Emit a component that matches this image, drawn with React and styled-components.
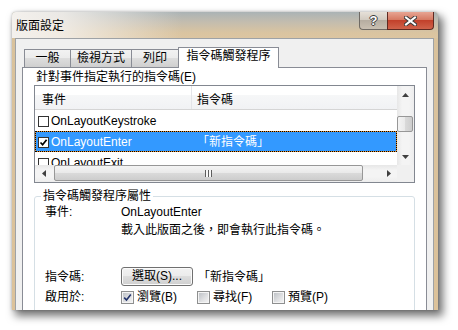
import React from 'react';
import styled, { createGlobalStyle } from 'styled-components';

const GlobalStyle = createGlobalStyle`
  html, body {
    margin: 0;
    padding: 0;
    background: #fff;
  }
  body {
    font-family: "Liberation Sans", "Noto Sans CJK TC", sans-serif;
    font-size: 12px;
    color: #000;
  }
  * {
    box-sizing: border-box;
  }
`;

const Page = styled.div`
  width: 458px;
  height: 330px;
  padding: 12px 0 0 12px;
  overflow: hidden;
`;

// 창 전체 (아래쪽은 잘려 있음)
const Window = styled.div`
  width: 426px;
  height: 298px;
  display: flex;
  flex-direction: column;
  overflow: hidden;
  border-radius: 4px 4px 0 0;
  background: linear-gradient(to bottom, #d9c29c, #dcc29a);
  box-shadow: 4px 5px 8px 1px rgba(0, 0, 0, 0.55), 0 0 3px rgba(0, 0, 0, 0.25);
`;

const TitleBar = styled.div`
  height: 26px;
  flex: none;
  display: flex;
  justify-content: space-between;
  align-items: flex-start;
  background:
    linear-gradient(to right, rgba(244, 241, 237, 1) 0%, rgba(244, 241, 237, 0.85) 12%, rgba(244, 241, 237, 0) 40%),
    linear-gradient(to bottom, #aab3b5 0%, #c4bdae 40%, #dac4a0 80%, #dcc5a1 100%);
`;

const Title = styled.div`
  padding: 5px 0 0 4px;
  line-height: 16px;
  font-family: "Noto Sans CJK TC", sans-serif;
`;

const CaptionButtons = styled.div`
  display: flex;
  margin-right: 4px;
`;

const HelpButton = styled.div`
  width: 28px;
  height: 18px;
  display: flex;
  align-items: center;
  justify-content: center;
  border: 1px solid #6f6a64;
  border-top: none;
  border-right: none;
  border-bottom-left-radius: 4px;
  background: linear-gradient(#e6e0d8 0%, #d2cbc1 45%, #b6ada1 50%, #c9bfb1 100%);
  color: #fff;
  font: bold 13px "Liberation Sans", sans-serif;
  text-shadow: 1px 0 #3c3c3c, -1px 0 #3c3c3c, 0 1px #3c3c3c, 0 -1px #3c3c3c;
`;

const CloseButton = styled.div`
  width: 47px;
  height: 18px;
  display: flex;
  align-items: center;
  justify-content: center;
  border: 1px solid #5f2a22;
  border-top: none;
  border-bottom-right-radius: 4px;
  background: linear-gradient(#e7a593 0%, #d67a63 45%, #c2412b 50%, #d0624a 100%);
`;

const FrameBody = styled.div`
  flex: 1;
  display: flex;
  padding: 0 4px 0 3px;
  min-height: 0;
`;

const Client = styled.div`
  flex: 1;
  display: flex;
  flex-direction: column;
  background: #f0f0f0;
  border: 1px solid #9ea2a6;
  border-bottom: none;
  padding: 8px 6px 0 6px;
  min-height: 0;
`;

const TabStrip = styled.div`
  height: 20px;
  flex: none;
  display: flex;
  align-items: flex-end;
  padding-left: 2px;
  position: relative;
  z-index: 1;
`;

const Tab = styled.div`
  width: ${({ $w }) => $w}px;
  height: ${({ $active }) => ($active ? 21 : 18)}px;
  margin-right: -1px;
  margin-bottom: ${({ $active }) => ($active ? -1 : 0)}px;
  border: 1px solid #898c95;
  border-bottom: none;
  text-align: center;
  line-height: ${({ $active }) => ($active ? 17 : 17)}px;
  background: ${({ $active }) =>
    $active ? '#fff' : 'linear-gradient(#f2f2f2 0%, #ebebeb 50%, #dddddd 50%, #cfcfcf 100%)'};
  white-space: nowrap;
`;

const Panel = styled.div`
  flex: 1;
  background: #fff;
  border: 1px solid #898c95;
  border-bottom: none;
  min-height: 0;
`;

const SectionLabel = styled.div`
  margin: 1px 0 0 13px;
  line-height: 16px;
`;

const ListBox = styled.div`
  margin-left: 11px;
  width: 381px;
  height: 98px;
  border: 1px solid #828790;
  display: grid;
  grid-template-columns: 362px 17px;
  grid-template-rows: 79px 17px;
`;

const ListView = styled.div`
  overflow: hidden;
  background: #fff;
`;

const ListHeader = styled.div`
  height: 24px;
  display: flex;
  border-bottom: 1px solid #d5d5d5;
  background: linear-gradient(#ffffff 0%, #ffffff 40%, #f6f7f8 40%, #f1f2f4 100%);
`;

const HeaderCell = styled.div`
  width: ${({ $w }) => ($w ? `${$w}px` : 'auto')};
  flex: ${({ $w }) => ($w ? 'none' : 1)};
  padding: 6px 0 0 ${({ $pad }) => $pad}px;
  line-height: 16px;
  border-right: ${({ $w }) => ($w ? '1px solid #e3e4e8' : 'none')};
`;

const Row = styled.div`
  height: 21px;
  display: flex;
  align-items: center;
  border: 1px ${({ $selected }) => ($selected ? 'dotted #000' : 'solid transparent')};
  background: ${({ $selected }) =>
    $selected ? 'linear-gradient(#3399ff, #3399ff) padding-box, #e8902a border-box' : 'none'};
  color: ${({ $selected }) => ($selected ? '#fff' : '#000')};
  line-height: 19px;
  white-space: nowrap;
`;

const Cell = styled.div`
  width: ${({ $w }) => ($w ? `${$w}px` : 'auto')};
  flex: ${({ $w }) => ($w ? 'none' : 1)};
  display: flex;
  align-items: center;
  gap: 2px;
  padding: 1px 0 0 ${({ $pad }) => $pad}px;
`;

const ListCheck = styled.span`
  width: 11px;
  height: 11px;
  flex: none;
  border: 1px solid #333;
  background: #fff;
  display: flex;
  align-items: center;
  justify-content: center;
`;

const VScroll = styled.div`
  display: flex;
  flex-direction: column;
  background: linear-gradient(to right, #e7e7e7, #f4f4f4 30%, #f4f4f4 70%, #ededed);
`;

const HScroll = styled.div`
  display: flex;
  background: linear-gradient(#e7e7e7, #f4f4f4 30%, #f4f4f4 70%, #ededed);
`;

const ScrollCorner = styled.div`
  background: #f0f0f0;
`;

const ScrollButton = styled.div`
  width: 17px;
  height: 17px;
  flex: none;
  display: flex;
  align-items: center;
  justify-content: center;
`;

const VTrack = styled.div`
  flex: 1;
  padding-top: ${({ $offset }) => $offset}px;
`;

const VThumb = styled.div`
  width: 16px;
  height: 16px;
  border: 1px solid #979797;
  border-radius: 2px;
  background: linear-gradient(to right, #f4f4f4, #e9e9e9 50%, #dadada 50%, #cdcdcd);
`;

const HTrack = styled.div`
  flex: 1;
  padding-left: ${({ $offset }) => $offset}px;
`;

const HThumb = styled.div`
  height: 16px;
  display: flex;
  align-items: center;
  justify-content: center;
  border: 1px solid #979797;
  border-radius: 2px;
  background: linear-gradient(#f4f4f4, #e9e9e9 50%, #dadada 50%, #cdcdcd);
`;

const Grip = styled.div`
  width: 7px;
  height: 7px;
  background: repeating-linear-gradient(to right, #5e5e5e 0 1px, #f8f8f8 1px 3px);
`;

const Group = styled.fieldset`
  margin: 5px 0 0 11px;
  width: 381px;
  padding: 0;
  min-width: 0;
  border: 1px solid #d5dfe5;
  border-radius: 3px;
`;

const Legend = styled.legend`
  margin-left: 6px;
  padding: 0 2px;
  line-height: 16px;
`;

const PropGrid = styled.div`
  display: grid;
  grid-template-columns: 76px 1fr;
  align-items: center;
  padding: 0 0 30px 10px;
  line-height: 18px;
  margin-top: -1px;
`;

const PropLabel = styled.div`
  align-self: ${({ $top }) => ($top ? 'start' : 'center')};
  margin-top: ${({ $gap }) => $gap || 0}px;
`;

const PropValue = styled.div`
  display: flex;
  flex-direction: ${({ $column }) => ($column ? 'column' : 'row')};
  align-items: ${({ $column }) => ($column ? 'flex-start' : 'center')};
  margin-top: ${({ $gap }) => $gap || 0}px;
  white-space: nowrap;
`;

const PushButton = styled.div`
  width: 72px;
  height: 19px;
  border: 1px solid #707070;
  border-radius: 3px;
  box-shadow: inset 0 0 0 1px #fbfbfb;
  background: linear-gradient(#f2f2f2 0%, #ebebeb 50%, #dddddd 50%, #cfcfcf 100%);
  text-align: center;
  line-height: 17px;
`;

const ScriptName = styled.span`
  margin-left: 5px;
`;

const CheckItem = styled.label`
  width: ${({ $w }) => ($w ? `${$w}px` : 'auto')};
  display: flex;
  align-items: center;
  gap: 3px;
`;

const CheckBox = styled.span`
  width: 13px;
  height: 13px;
  flex: none;
  border: 1px solid #8e8f8f;
  box-shadow: inset 0 0 0 1px #f4f4f4;
  background: linear-gradient(135deg, #b9bdc2 0%, #dedfe1 55%, #f6f6f6 100%);
  display: flex;
  align-items: center;
  justify-content: center;
`;

function Arrow({ dir }) {
  const pts = {
    up: '3.5,0 7,4 0,4',
    down: '0,0 7,0 3.5,4',
    left: '4,0 4,7 0,3.5',
    right: '0,0 4,3.5 0,7',
  }[dir];
  const vertical = dir === 'up' || dir === 'down';
  return (
    <svg width={vertical ? 7 : 4} height={vertical ? 4 : 7}>
      <polygon points={pts} fill="#404040" />
    </svg>
  );
}

const tabs = [
  { label: '一般', w: 47 },
  { label: '檢視方式', w: 62 },
  { label: '列印', w: 48 },
  { label: '指令碼觸發程序', w: 101, active: true },
];

const events = [
  { name: 'OnLayoutKeystroke', script: '', checked: false },
  { name: 'OnLayoutEnter', script: '「新指令碼」', checked: true, selected: true },
  { name: 'OnLayoutExit', script: '', checked: false },
];

export default function App() {
  return (
    <>
      <GlobalStyle />
      <Page>
        <Window>
          <TitleBar>
            <Title>版面設定</Title>
            <CaptionButtons>
              <HelpButton>?</HelpButton>
              <CloseButton>
                <svg width="13" height="10" viewBox="0 0 13 10">
                  <path d="M2 1.5 L11 8.5 M11 1.5 L2 8.5" stroke="#3a3a3a" strokeWidth="4" strokeLinecap="square" />
                  <path d="M2 1.5 L11 8.5 M11 1.5 L2 8.5" stroke="#fff" strokeWidth="2" strokeLinecap="square" />
                </svg>
              </CloseButton>
            </CaptionButtons>
          </TitleBar>

          <FrameBody>
            <Client>
              <TabStrip>
                {tabs.map((t) => (
                  <Tab key={t.label} $w={t.w} $active={t.active}>
                    {t.label}
                  </Tab>
                ))}
              </TabStrip>

              <Panel>
                <SectionLabel>針對事件指定執行的指令碼(E)</SectionLabel>

                <ListBox>
                  <ListView>
                    <ListHeader>
                      <HeaderCell $w={157} $pad={7}>事件</HeaderCell>
                      <HeaderCell $pad={5}>指令碼</HeaderCell>
                    </ListHeader>
                    {events.map((ev) => (
                      <Row key={ev.name} $selected={ev.selected}>
                        <Cell $w={156} $pad={2}>
                          <ListCheck>
                            {ev.checked && (
                              <svg width="9" height="9" viewBox="0 0 9 9">
                                <path d="M1.5 4.5 L3.6 6.8 L7.6 1.8" stroke="#000" strokeWidth="1.7" fill="none" />
                              </svg>
                            )}
                          </ListCheck>
                          {ev.name}
                        </Cell>
                        <Cell $pad={5}>{ev.script}</Cell>
                      </Row>
                    ))}
                  </ListView>

                  <VScroll>
                    <ScrollButton><Arrow dir="up" /></ScrollButton>
                    <VTrack $offset={13}>
                      <VThumb />
                    </VTrack>
                    <ScrollButton><Arrow dir="down" /></ScrollButton>
                  </VScroll>

                  <HScroll>
                    <ScrollButton><Arrow dir="left" /></ScrollButton>
                    <HTrack $offset={2}>
                      <HThumb style={{ width: 309 }}>
                        <Grip />
                      </HThumb>
                    </HTrack>
                    <ScrollButton><Arrow dir="right" /></ScrollButton>
                  </HScroll>
                  <ScrollCorner />
                </ListBox>

                <Group>
                  <Legend>指令碼觸發程序屬性</Legend>
                  <PropGrid>
                    <PropLabel $top>事件:</PropLabel>
                    <PropValue $column>
                      <span>OnLayoutEnter</span>
                      <span>載入此版面之後，即會執行此指令碼。</span>
                    </PropValue>

                    <PropLabel $gap={28}>指令碼:</PropLabel>
                    <PropValue $gap={28}>
                      <PushButton>選取(S)...</PushButton>
                      <ScriptName>「新指令碼」</ScriptName>
                    </PropValue>

                    <PropLabel $gap={2}>啟用於:</PropLabel>
                    <PropValue $gap={2}>
                      <CheckItem $w={76}>
                        <CheckBox>
                          <svg width="9" height="9" viewBox="0 0 9 9">
                            <path d="M1.2 4.6 L3.5 7 L7.8 1.6" stroke="#22336b" strokeWidth="1.6" fill="none" />
                          </svg>
                        </CheckBox>
                        瀏覽(B)
                      </CheckItem>
                      <CheckItem $w={75}>
                        <CheckBox />
                        尋找(F)
                      </CheckItem>
                      <CheckItem>
                        <CheckBox />
                        預覽(P)
                      </CheckItem>
                    </PropValue>
                  </PropGrid>
                </Group>
              </Panel>
            </Client>
          </FrameBody>
        </Window>
      </Page>
    </>
  );
}
